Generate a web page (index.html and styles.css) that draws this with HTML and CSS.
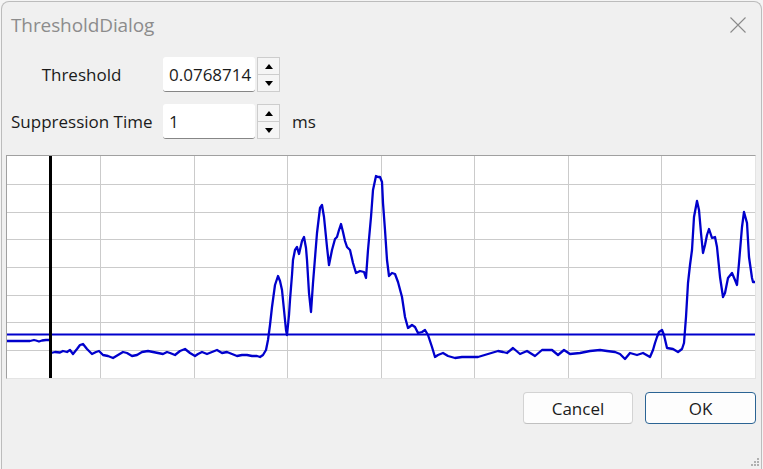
FILE: index.html
```html
<!DOCTYPE html>
<html>
<head>
<meta charset="utf-8">
<link rel="stylesheet" href="styles.css">
</head>
<body>
<div class="window">
  <div class="titlebar">
    <span class="title">ThresholdDialog</span>
    <svg class="close" width="16" height="16" viewBox="0 0 16 16"><path d="M0.5 0.5 L15.5 15.5 M15.5 0.5 L0.5 15.5" stroke="#8a8a8a" stroke-width="1.1" fill="none"/></svg>
  </div>
  <div class="form">
    <div class="row">
      <span class="lbl">Threshold</span>
      <div class="field">0.0768714</div>
      <div class="spin"><div class="sbtn"><i class="up"></i></div><div class="sbtn"><i class="down"></i></div></div>
    </div>
    <div class="row">
      <span class="lbl">Suppression Time</span>
      <div class="field">1</div>
      <div class="spin"><div class="sbtn"><i class="up"></i></div><div class="sbtn"><i class="down"></i></div></div>
      <span class="unit">ms</span>
    </div>
  </div>
  <div class="plot">
    <svg width="748" height="222" viewBox="7 156 748 222">
      <g stroke="#cbcbcb" stroke-width="1" shape-rendering="crispEdges">
        <line x1="100.5" y1="156" x2="100.5" y2="378"/>
        <line x1="194.5" y1="156" x2="194.5" y2="378"/>
        <line x1="287.5" y1="156" x2="287.5" y2="378"/>
        <line x1="381.5" y1="156" x2="381.5" y2="378"/>
        <line x1="474.5" y1="156" x2="474.5" y2="378"/>
        <line x1="568.5" y1="156" x2="568.5" y2="378"/>
        <line x1="661.5" y1="156" x2="661.5" y2="378"/>
        <line x1="7" y1="184.5" x2="755" y2="184.5"/>
        <line x1="7" y1="212.5" x2="755" y2="212.5"/>
        <line x1="7" y1="239.5" x2="755" y2="239.5"/>
        <line x1="7" y1="267.5" x2="755" y2="267.5"/>
        <line x1="7" y1="295.5" x2="755" y2="295.5"/>
        <line x1="7" y1="322.5" x2="755" y2="322.5"/>
        <line x1="7" y1="350.5" x2="755" y2="350.5"/>
      </g>
      <line x1="7" y1="334.5" x2="755" y2="334.5" stroke="#0000cc" stroke-width="2"/>
      <polyline fill="none" stroke="#0000cc" stroke-width="2.3" stroke-linejoin="round" points="7,341 20,341 30,341 34,340 36,340.5 39,341.5 42,340.5 46,340 50,340"/>
      <polyline fill="none" stroke="#0000cc" stroke-width="2.3" stroke-linejoin="round" points="51,353 55,352 60,352.5 63,351 67,352 70,350 73,354 77,349 80,345 83,344 87,349 92,354 96,352 99,351 103,355 108,356 113,358 118,355 123,352 127,353 132,356 137,355 142,352 148,351 153,352 158,353 163,354 167,352 170,353 175,355 180,351 185,349 190,353 195,356 198,354 202,352 207,354 212,352 217,350 222,353 227,352 232,354 237,356 242,355 247,355 252,356 257,356 260,357 263,355 266,350 268,340 270,325 272,307 275,285 278,276 280,281 282,290 284,310 286,330 287,335 289,315 290,300 292,275 293,260 295,250 297,247 299,254 302,241 304,237 306,248 307,260 309,293 311,312 313,283 315,258 317,233 320,208 322,205 324,217 327,247 329,265 332,250 335,239 337,237 339,230 341,224 343,232 345,241 347,247 350,250 353,263 356,273 360,271 364,272 366,278 368,250 371,217 373,190 376,176 378,177 380,177 382,182 383,203 385,230 387,260 389,276 392,273 395,274 398,282 402,297 405,317 408,328 412,325 415,327 418,333 422,332 425,330 428,335 432,347 435,357 438,355 443,353 448,356 455,358 462,357 470,357 478,357 488,354 498,351 503,352 507,353 513,348 520,354 527,351 535,356 542,350 552,350 558,355 564,350 570,354 580,353 590,351 600,350 607,351 615,352 620,354 625,359 630,353 637,355 643,353 650,357 653,350 655,343 657,337 659,332 662,330 664,335 667,348 673,349 678,352 682,349 684,343 686,317 688,283 690,265 692,250 694,217 697,201 699,210 701,233 703,253 705,245 707,235 709,229 712,238 715,237 717,247 720,277 723,297 725,293 728,278 732,273 735,280 737,285 739,263 742,227 744,212 747,223 749,257 752,278 753,282 755,282"/>
      <rect x="49" y="156" width="3" height="222" fill="#000"/>
    </svg>
  </div>
  <div class="actions">
    <button class="btn">Cancel</button>
    <button class="btn ok">OK</button>
  </div>
  <div class="grip"></div>
</div>
</body>
</html>
```

FILE: styles.css
```css
html, body {
  margin: 0;
  padding: 0;
}
body {
  width: 763px;
  height: 469px;
  overflow: hidden;
  background: #f4f4f4;
  font-family: "Open Sans", "Noto Sans", sans-serif;
  color: #1b1b1b;
}
.window {
  position: relative;
  box-sizing: border-box;
  margin: 1px 0 0 1px;
  width: 761px;
  height: 468px;
  border: 1px solid #bcbcbc;
  border-bottom: none;
  border-radius: 8px 8px 0 0;
  background: #f0f0f0;
}
.titlebar {
  height: 45px;
  display: flex;
  align-items: center;
  justify-content: space-between;
  padding: 0 15px 0 9px;
}
.title {
  font-size: 19px;
  color: #8c8c8c;
  letter-spacing: -0.1px;
}
.close {
  display: block;
}
.form {
  padding: 10px 0 0 9px;
  display: flex;
  flex-direction: column;
  gap: 12px;
}
.row {
  display: flex;
  align-items: center;
  height: 35px;
}
.lbl {
  width: 141px;
  text-align: center;
  margin-right: 11px;
  font-size: 17px;
  white-space: nowrap;
}
.field {
  box-sizing: border-box;
  width: 92px;
  height: 35px;
  background: #fff;
  border-bottom: 1px solid #868686;
  border-radius: 3px;
  padding-left: 6px;
  display: flex;
  align-items: center;
  font-size: 17px;
}
.spin {
  margin-left: 2px;
  width: 23px;
  height: 35px;
  display: flex;
  flex-direction: column;
}
.sbtn {
  box-sizing: border-box;
  flex: 1;
  border: 1px solid #cdcdcd;
  background: #f5f5f5;
  display: flex;
  align-items: center;
  justify-content: center;
}
.sbtn + .sbtn {
  border-top: none;
}
.up {
  width: 0;
  height: 0;
  border-left: 4px solid transparent;
  border-right: 4px solid transparent;
  border-bottom: 5px solid #000;
}
.down {
  width: 0;
  height: 0;
  border-left: 4px solid transparent;
  border-right: 4px solid transparent;
  border-top: 5px solid #000;
}
.unit {
  margin-left: 12px;
  font-size: 17px;
}
.plot {
  box-sizing: border-box;
  margin: 16px 0 0 4px;
  width: 750px;
  height: 224px;
  border-top: 1px solid #a0a0a0;
  border-left: 1px solid #a0a0a0;
  border-right: 1px solid #e4e4e4;
  border-bottom: 1px solid #e4e4e4;
  background: #fff;
}
.plot svg {
  display: block;
}
.actions {
  display: flex;
  justify-content: flex-end;
  gap: 12px;
  padding-right: 5px;
  margin-top: 13px;
}
.btn {
  box-sizing: border-box;
  width: 110px;
  height: 32px;
  background: #fdfdfd;
  border: 1px solid #d3d3d3;
  border-bottom-color: #c0c0c0;
  border-radius: 4px;
  font-family: "Open Sans", "Noto Sans", sans-serif;
  font-size: 17px;
  color: #1b1b1b;
  padding: 0;
}
.btn.ok {
  width: 111px;
  border: 1px solid #2b6494;
}
.grip {
  position: absolute;
  right: 2px;
  bottom: 3px;
  width: 2px;
  height: 2px;
  background: #b0b0b0;
  box-shadow: -3px 0 #b0b0b0, -6px 0 #b0b0b0, 0 -3px #b0b0b0, -3px -3px #b0b0b0, 0 -6px #b0b0b0;
}
```
